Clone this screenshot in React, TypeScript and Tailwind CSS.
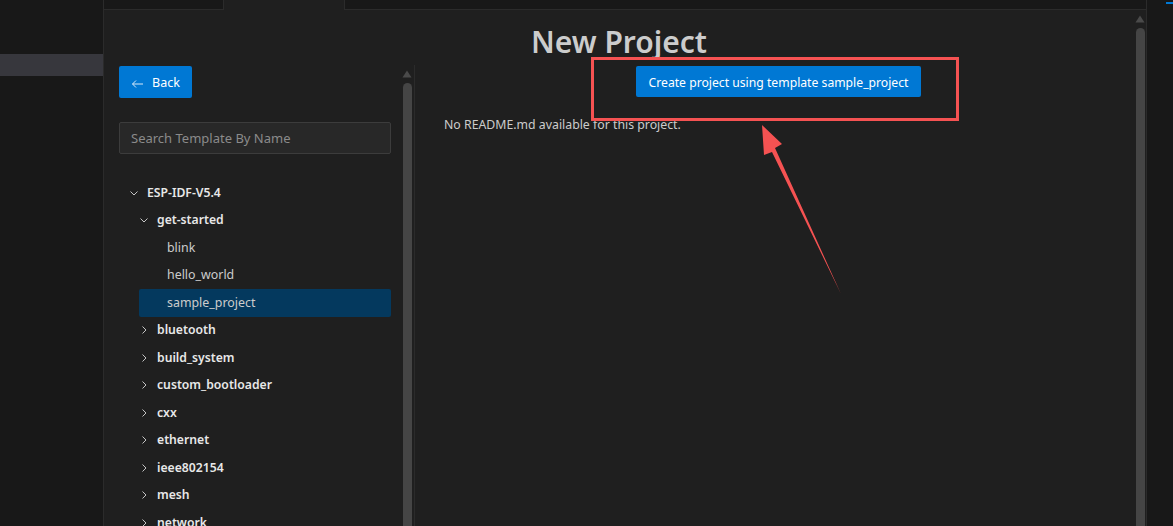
import React from "react";

const font = { fontFamily: '"Segoe UI", "Noto Sans", "Open Sans", sans-serif' };

function ChevronDown() {
  return (
    <svg width="10" height="10" viewBox="0 0 10 10" className="shrink-0">
      <path d="M1.5 3.5 L5 7 L8.5 3.5" fill="none" stroke="#c5c5c5" strokeWidth="1" />
    </svg>
  );
}
function ChevronRight() {
  return (
    <svg width="10" height="10" viewBox="0 0 10 10" className="shrink-0">
      <path d="M3.5 1.5 L7 5 L3.5 8.5" fill="none" stroke="#c5c5c5" strokeWidth="1" />
    </svg>
  );
}

type Row = { label: string; level: number; kind: "open" | "closed" | "leaf"; selected?: boolean };

const rows: Row[] = [
  { label: "ESP-IDF-V5.4", level: 0, kind: "open" },
  { label: "get-started", level: 1, kind: "open" },
  { label: "blink", level: 2, kind: "leaf" },
  { label: "hello_world", level: 2, kind: "leaf" },
  { label: "sample_project", level: 2, kind: "leaf", selected: true },
  { label: "bluetooth", level: 1, kind: "closed" },
  { label: "build_system", level: 1, kind: "closed" },
  { label: "custom_bootloader", level: 1, kind: "closed" },
  { label: "cxx", level: 1, kind: "closed" },
  { label: "ethernet", level: 1, kind: "closed" },
  { label: "ieee802154", level: 1, kind: "closed" },
  { label: "mesh", level: 1, kind: "closed" },
  { label: "network", level: 1, kind: "closed" },
];

function TreeRow({ row }: { row: Row }) {
  const pad =
    row.level === 0 ? "pl-[10px]" : row.level === 1 ? "pl-[20px]" : "ml-[20px] pl-[20px]";
  return (
    <div
      className={`h-[27.5px] flex items-center rounded-[2px] ${pad} ${row.selected ? "bg-[#04395e]" : ""}`}
    >
      {row.kind === "open" && <ChevronDown />}
      {row.kind === "closed" && <ChevronRight />}
      <span
        className={`ml-[8px] leading-none ${
          row.kind === "leaf"
            ? "text-[12.4px] text-[#cccccc] font-normal"
            : "text-[12.2px] text-[#e8e8e8] font-semibold"
        }`}
      >
        {row.label}
      </span>
    </div>
  );
}

function ScrollBar({ arrowTop }: { arrowTop: string }) {
  return (
    <div className={`w-[10px] flex flex-col items-center ${arrowTop}`}>
      <svg width="10" height="8" viewBox="0 0 10 8" className="shrink-0">
        <path d="M5 0.5 L9.5 7.5 L0.5 7.5 Z" fill="#4a4a4a" />
      </svg>
      <div className="mt-[5px] flex-1 w-[9px] rounded-t-[5px] bg-[#454545]" />
    </div>
  );
}

export default function App() {
  return (
    <div className="relative w-[1173px] h-[526px] flex bg-[#1f1f1f] overflow-hidden" style={font}>
      {/* left activity / explorer strip */}
      <aside className="w-[104px] shrink-0 bg-[#181818] border-r border-[#2b2b2b] pt-[54px]">
        <div className="h-[22px] bg-[#37373d]" />
      </aside>

      {/* main editor */}
      <main className="flex-1 flex flex-col min-w-0">
        <div className="h-[10px] flex shrink-0">
          <div className="w-[120px] bg-[#181818] border-b border-r border-[#2b2b2b]" />
          <div className="w-[120px] bg-[#1f1f1f]" />
          <div className="flex-1 bg-[#181818] border-b border-l border-[#2b2b2b]" />
        </div>
        <div className="flex-1 flex min-h-0">
          <div className="flex-1 flex flex-col min-w-0">
            <h1 className="h-[50px] pt-[12px] text-center text-[30px] leading-[40px] font-semibold text-[#cccccc]">
              New Project
            </h1>
            <div className="flex-1 flex min-h-0">
              {/* template list */}
              <div className="w-[311px] shrink-0 flex border-r border-[#2b2b2b] mt-[5px]">
                <div className="flex-1 pl-[15px] pr-[10px] pt-[1px]">
                  <button className="h-[32px] w-[73px] rounded-[2px] bg-[#0078d4] text-white text-[12.5px] flex items-center justify-center gap-[8px] pt-[3px]">
                    <svg width="13" height="10" viewBox="0 0 13 10">
                      <path d="M12 5 H1.5 M5 1.5 L1.5 5 L5 8.5" fill="none" stroke="#d8e8f8" strokeWidth="1" />
                    </svg>
                    <span>Back</span>
                  </button>
                  <div className="mt-[24px] h-[32px] w-[272px] rounded-[2px] bg-[#282828] border border-[#3c3c3c] flex items-center pl-[11px] pt-[1px] text-[13px] text-[#8b8b8b]">
                    Search Template By Name
                  </div>
                  <div className="mt-[25px] w-[272px]">
                    {rows.map((r) => (
                      <TreeRow key={r.label} row={r} />
                    ))}
                  </div>
                </div>
                <div className="w-[13px] flex pl-[1px]">
                  <ScrollBar arrowTop="pt-[5px]" />
                </div>
              </div>
              {/* readme panel */}
              <div className="flex-1 min-w-0 flex flex-col pt-[6px]">
                <div className="flex justify-center pl-[8px]">
                  <button className="h-[31px] px-[13px] pt-[4px] rounded-[2px] bg-[#0078d4] text-white text-[12.2px]">
                    Create project using template sample_project
                  </button>
                </div>
                <p className="mt-[19px] pl-[29px] text-[12.3px] text-[#cccccc]">
                  No README.md available for this project.
                </p>
              </div>
            </div>
          </div>
          <div className="w-[12px] shrink-0 flex pl-[1px]">
            <ScrollBar arrowTop="pt-[5px]" />
          </div>
        </div>
      </main>

      {/* right side panel */}
      <aside className="w-[27px] shrink-0 bg-[#181818] border-l border-[#2b2b2b] relative">
        <div className="absolute top-[2px] right-0 w-[7px] h-[2px] bg-[#0078d4]" />
      </aside>

      {/* annotation overlay */}
      <svg className="absolute inset-0 pointer-events-none" width="1173" height="526" viewBox="0 0 1173 526">
        <rect x="592.5" y="58.5" width="365" height="61" fill="none" stroke="#f55252" strokeWidth="3" />
        <path d="M762 125 L782 144 L775 148 L841 294 L772 152 L764 155 Z" fill="#f55252" />
      </svg>
    </div>
  );
}
